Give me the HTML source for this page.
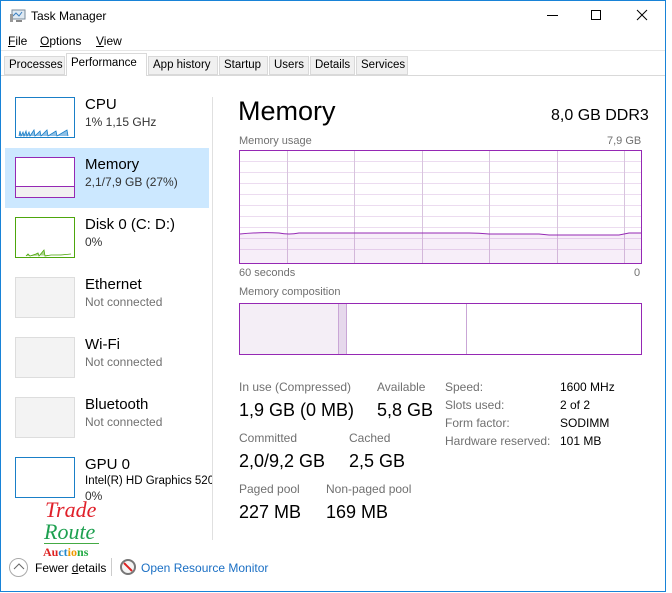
<!DOCTYPE html>
<html><head><style>
*{margin:0;padding:0;box-sizing:border-box}
body{width:672px;height:593px;background:#fff;font-family:"Liberation Sans",sans-serif;position:relative;overflow:hidden;color:#000}
.a{position:absolute;white-space:nowrap}
.win{position:absolute;left:0;top:0;width:666px;height:592px;border:1px solid #1883d7;}
.tab{position:absolute;top:56px;height:19px;border:1px solid #d9d9d9;background:#f0f0f0;font-size:11.5px;padding:2px 0 0 4px;white-space:nowrap;overflow:hidden}
.thumb{position:absolute;left:15px;width:60px;height:41px;border:1px solid #ddd;background:#f3f3f3}
.t1{font-size:15px}
.t2{font-size:12px;color:#333}
.lbl{font-size:12px;color:#707070}
.big{font-size:18px}
.sm{font-size:12px;color:#555}
</style></head><body>
<div class="win"></div>
<svg class="a" style="left:9px;top:8px" width="18" height="16"><rect x="3" y="2" width="13" height="9" fill="#dfe9f2" stroke="#7a8a99"/><polyline points="4,8 7,5 10,8 13,4" fill="none" stroke="#3a7fc0"/><rect x="1" y="6" width="3" height="8" fill="#999"/><rect x="7" y="12" width="6" height="2" fill="#888"/></svg>
<div class="a" style="left:31px;top:9px;font-size:12px">Task Manager</div>
<div class="a" style="left:547px;top:15px;width:11px;height:1px;background:#000"></div>
<div class="a" style="left:591px;top:10px;width:10px;height:10px;border:1px solid #000"></div>
<svg class="a" style="left:636px;top:9px" width="12" height="12"><path d="M1 1L11 11M11 1L1 11" stroke="#000"/></svg>
<div class="a" style="left:8px;top:34px;font-size:12px"><u>F</u>ile</div>
<div class="a" style="left:40px;top:34px;font-size:12px"><u>O</u>ptions</div>
<div class="a" style="left:96px;top:34px;font-size:12px"><u>V</u>iew</div>
<div class="a" style="left:1px;top:50px;width:664px;height:1px;background:#e6e6e6"></div>
<div class="a" style="left:1px;top:75px;width:664px;height:1px;background:#d9d9d9"></div>
<div class="tab" style="left:4px;width:61px">Processes</div>
<div class="tab" style="left:66px;top:53px;height:23px;width:81px;background:#fff;border-bottom:none;padding-top:3px">Performance</div>
<div class="tab" style="left:148px;width:70px">App history</div>
<div class="tab" style="left:219px;width:49px">Startup</div>
<div class="tab" style="left:269px;width:40px">Users</div>
<div class="tab" style="left:310px;width:45px">Details</div>
<div class="tab" style="left:356px;width:52px">Services</div>
<div class="a" style="left:212px;top:97px;width:1px;height:443px;background:#e0e0e0"></div>
<div class="a" style="left:5px;top:148px;width:204px;height:60px;background:#cce8ff"></div>
<div class="thumb" style="top:97px;border-color:#1a7fc7;background:#fff"><svg width="58" height="39"><path d="M3 38L4 33L5 38L7 34L8 38L10 33L11 38L13 34L14 38L18 32L19 38L24 33L25 38L31 32L32 38L40 33L41 38L51 32L52 38" fill="#8fc0e6" stroke="#1a7fc7" stroke-width=".8"/></svg></div>
<div class="a t1" style="left:85px;top:96px">CPU</div>
<div class="a t2" style="left:85px;top:115px">1% 1,15 GHz</div>
<div class="thumb" style="top:157px;border-color:#9528b4;background:#fff"><div style="position:absolute;left:0;right:0;bottom:0;height:11px;border-top:1px solid #9528b4;background:#f1f1f1"></div></div>
<div class="a t1" style="left:85px;top:156px">Memory</div>
<div class="a t2" style="left:85px;top:175px">2,1/7,9 GB (27%)</div>
<div class="thumb" style="top:217px;border-color:#4da60c;background:#fff"><svg width="58" height="39"><path d="M10 38L12 36L14 38L20 36L22 35L23 38L28 32L29 38L35 37L45 37L55 36" fill="#a9d58a" stroke="#4da60c" stroke-width=".8"/></svg></div>
<div class="a t1" style="left:85px;top:216px">Disk 0 (C: D:)</div>
<div class="a t2" style="left:85px;top:235px">0%</div>
<div class="thumb" style="top:277px"></div>
<div class="a t1" style="left:85px;top:276px">Ethernet</div>
<div class="a sm" style="left:85px;top:295px;color:#707070">Not connected</div>
<div class="thumb" style="top:337px"></div>
<div class="a t1" style="left:85px;top:336px">Wi-Fi</div>
<div class="a sm" style="left:85px;top:355px;color:#707070">Not connected</div>
<div class="thumb" style="top:397px"></div>
<div class="a t1" style="left:85px;top:396px">Bluetooth</div>
<div class="a sm" style="left:85px;top:415px;color:#707070">Not connected</div>
<div class="thumb" style="top:457px;border-color:#1a7fc7;background:#fff"></div>
<div class="a t1" style="left:85px;top:456px">GPU 0</div>
<div class="a" style="left:85px;top:475px;font-size:11.5px;width:127px;overflow:hidden">Intel(R) HD Graphics 520</div>
<div class="a t2" style="left:85px;top:489px">0%</div>
<div class="a" style="left:45px;top:497px;font-family:'Liberation Serif',serif;font-style:italic;font-size:22px;color:#e0202a">Trade</div>
<div class="a" style="left:44px;top:519px;font-family:'Liberation Serif',serif;font-style:italic;font-size:22px;color:#1ea050">Route</div>
<div class="a" style="left:44px;top:543px;width:55px;height:1px;background:#4a4"></div>
<div class="a" style="left:43px;top:545px;font-family:'Liberation Serif',serif;font-weight:bold;font-size:12px"><span style="color:#d22">Au</span><span style="color:#28c">ct</span><span style="color:#e90">io</span><span style="color:#2a4">ns</span></div>
<div class="a" style="left:9px;top:558px;width:19px;height:19px;border:1px solid #aaa;border-radius:50%"></div>
<svg class="a" style="left:13px;top:563px" width="12" height="8"><path d="M1 6L6 1L11 6" fill="none" stroke="#666"/></svg>
<div class="a" style="left:35px;top:561px;font-size:12px">Fewer <u>d</u>etails</div>
<div class="a" style="left:111px;top:558px;width:1px;height:18px;background:#ccc"></div>
<div class="a" style="left:120px;top:559px;width:16px;height:16px;border:2px solid #777;border-radius:50%;background:#f4f4f4"></div>
<svg class="a" style="left:122px;top:561px" width="12" height="12"><path d="M2 2L10 10" stroke="#d22" stroke-width="2"/></svg>
<div class="a" style="left:141px;top:561px;font-size:12px;color:#1a6fc4">Open Resource Monitor</div>
<div class="a" style="left:238px;top:96px;font-size:27px">Memory</div>
<div class="a" style="left:551px;top:107px;font-size:16px">8,0 GB DDR3</div>
<div class="a lbl" style="left:239px;top:135px;font-size:11px">Memory usage</div>
<div class="a lbl" style="left:607px;top:135px;font-size:11px">7,9 GB</div>
<svg class="a" style="left:239px;top:150px" width="403" height="114">
<g stroke="#ecdcf0" stroke-width="1">
<path d="M0 11.5H403M0 22.5H403M0 33.5H403M0 44.5H403M0 55.5H403M0 66.5H403M0 77.5H403M0 88.5H403M0 99.5H403"/>
</g>
<g stroke="#d8c4de"><path d="M48.5 0V114M115.5 0V114M183.5 0V114M250.5 0V114M318.5 0V114M385.5 0V114"/></g>
<path d="M1 84Q20 82 40 83Q50 85 60 83L230 83Q240 83 250 84L300 84L310 85L380 85L390 83L402 83V113H1Z" fill="#9528b4" fill-opacity=".08" stroke="none"/>
<path d="M1 84Q20 82 40 83Q50 85 60 83L230 83Q240 83 250 84L300 84L310 85L380 85L390 83L402 83" fill="none" stroke="#9528b4" stroke-width="1"/>
<rect x=".5" y=".5" width="402" height="113" fill="none" stroke="#9528b4"/>
</svg>
<div class="a lbl" style="left:239px;top:267px;font-size:11px">60 seconds</div>
<div class="a lbl" style="left:634px;top:267px;font-size:11px">0</div>
<div class="a lbl" style="left:239px;top:286px;font-size:11px">Memory composition</div>
<svg class="a" style="left:239px;top:303px" width="403" height="52">
<rect x="1" y="1" width="98" height="50" fill="#f4eef6"/>
<rect x="99" y="1" width="8" height="50" fill="#e6d8ec"/>
<path d="M99.5 0V52M107.5 0V52M227.5 0V52" stroke="#c9a6d6"/>
<rect x=".5" y=".5" width="402" height="51" fill="none" stroke="#9528b4"/>
</svg>
<div class="a lbl" style="left:239px;top:380px">In use (Compressed)</div>
<div class="a lbl" style="left:377px;top:380px">Available</div>
<div class="a big" style="left:239px;top:400px">1,9 GB (0 MB)</div>
<div class="a big" style="left:377px;top:400px">5,8 GB</div>
<div class="a lbl" style="left:239px;top:431px">Committed</div>
<div class="a lbl" style="left:349px;top:431px">Cached</div>
<div class="a big" style="left:239px;top:451px">2,0/9,2 GB</div>
<div class="a big" style="left:349px;top:451px">2,5 GB</div>
<div class="a lbl" style="left:239px;top:482px">Paged pool</div>
<div class="a lbl" style="left:326px;top:482px">Non-paged pool</div>
<div class="a big" style="left:239px;top:502px">227 MB</div>
<div class="a big" style="left:326px;top:502px">169 MB</div>
<div class="a lbl" style="left:445px;top:380px">Speed:</div>
<div class="a lbl" style="left:445px;top:398px">Slots used:</div>
<div class="a lbl" style="left:445px;top:416px">Form factor:</div>
<div class="a lbl" style="left:445px;top:434px">Hardware reserved:</div>
<div class="a" style="left:560px;top:380px;font-size:12px">1600 MHz</div>
<div class="a" style="left:560px;top:398px;font-size:12px">2 of 2</div>
<div class="a" style="left:560px;top:416px;font-size:12px">SODIMM</div>
<div class="a" style="left:560px;top:434px;font-size:12px">101 MB</div>
</body></html>
